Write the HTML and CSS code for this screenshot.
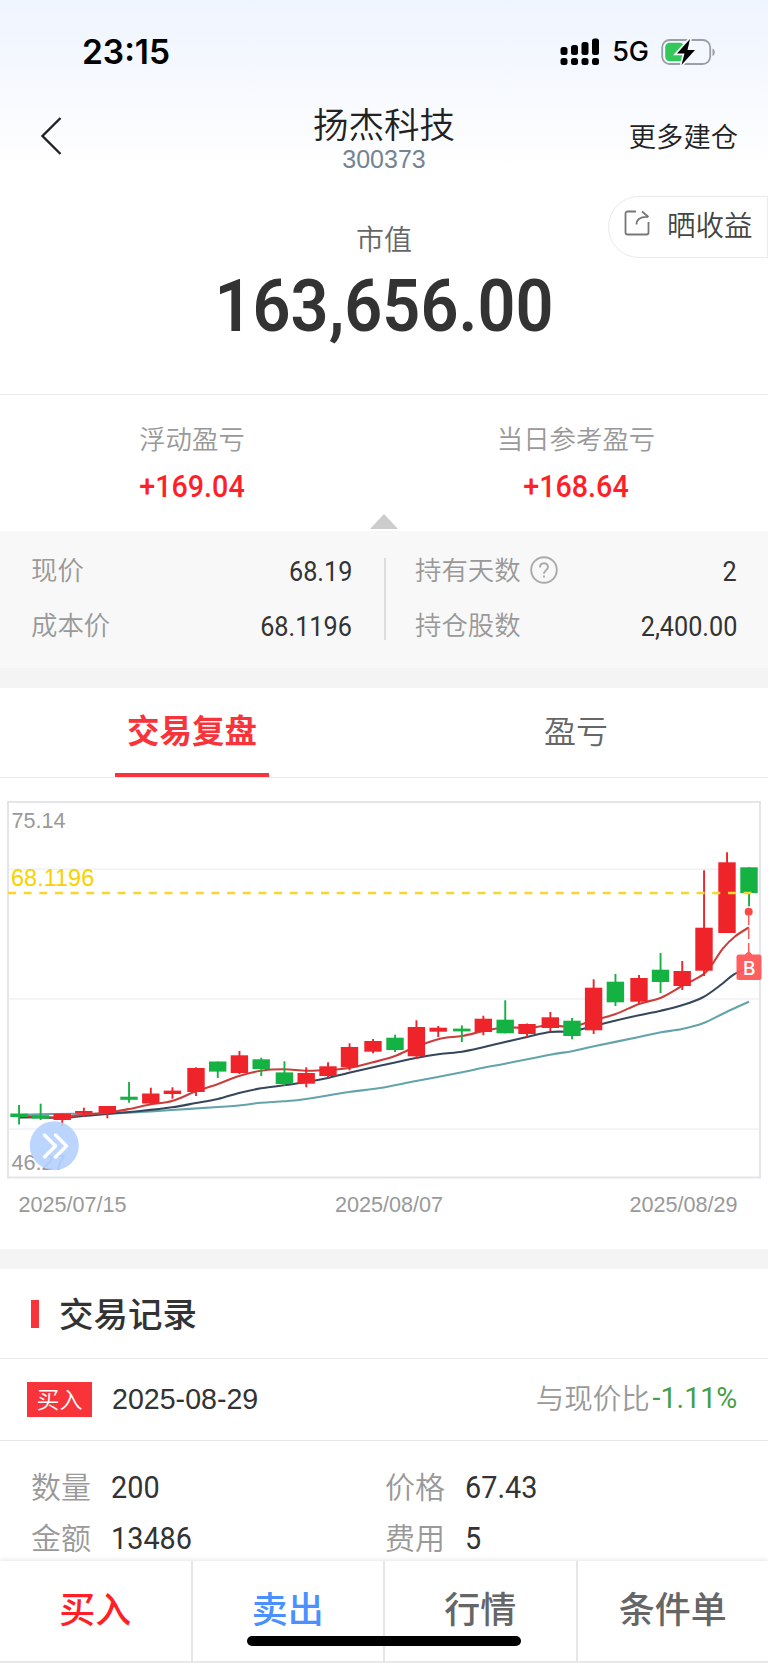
FILE: index.html
```html
<!DOCTYPE html>
<html lang="zh-CN">
<head>
  <meta charset="UTF-8">
  <title>扬杰科技 300373</title>
  <link rel="stylesheet" href="styles.css">
</head>
<body>
  <div class="top">
    <div class="status-bar">
      <span class="time">23:15</span>
      <div class="status-right">
        <svg class="signal" width="40" height="28" viewBox="0 0 40 28">
          <rect x="0.5" y="9" width="7" height="8" rx="2.5"/>
          <rect x="11" y="7" width="7" height="10" rx="2.5"/>
          <rect x="21.5" y="4" width="7" height="13" rx="2.5"/>
          <rect x="32" y="0.5" width="7" height="16.5" rx="2.5"/>
          <rect x="0.5" y="20" width="7" height="7" rx="2.5"/>
          <rect x="11" y="20" width="7" height="7" rx="2.5"/>
          <rect x="21.5" y="20" width="7" height="7" rx="2.5"/>
          <rect x="32" y="20" width="7" height="7" rx="2.5"/>
        </svg>
        <span class="network">5G</span>
        <svg class="battery" width="56" height="28" viewBox="0 0 56 28">
          <rect x="1.2" y="2" width="48" height="24" rx="7.5" fill="none" stroke="#9b9fa5" stroke-width="1.8"/>
          <path d="M51.5 10.5c3 1 3 6.500 0 7.500z" fill="#9b9fa5"/>
          <rect x="4.2" y="4.7" width="19" height="18.6" rx="4.5" fill="#34c759"/>
          <path d="M29 1 16 15.500h7.500L20.500 27 34 12h-7.500z" fill="#000" stroke="#f5f8fe" stroke-width="3.5" paint-order="stroke"/>
        </svg>
      </div>
    </div>

    <div class="nav">
      <svg class="back" width="24" height="40" viewBox="0 0 24 40">
        <path d="M20.5 2 2.5 20l18 18" fill="none" stroke="#222" stroke-width="2.4"/>
      </svg>
      <div class="stock">
        <div class="stock-name">扬杰科技</div>
        <div class="stock-code">300373</div>
      </div>
      <div class="more">更多建仓</div>
    </div>
  </div>

  <div class="market">
    <div class="share">
      <svg width="26" height="26" viewBox="0 0 26 26" fill="none" stroke="#777" stroke-width="1.8">
        <path d="M12 1.5H3.5a2 2 0 0 0-2 2v19a2 2 0 0 0 2 2h19a2 2 0 0 0 2-2V12"/>
        <path d="M12.500 14.500c0-5 3.500-8 11.500-7.500M18 1.500 24.500 7"/>
      </svg>
      <span>晒收益</span>
    </div>
    <div class="market-label">市值</div>
    <div class="market-value">163,656.00</div>
  </div>

  <div class="profit">
    <div class="profit-item">
      <div class="profit-label">浮动盈亏</div>
      <div class="profit-value">+169.04</div>
    </div>
    <div class="profit-item">
      <div class="profit-label">当日参考盈亏</div>
      <div class="profit-value">+168.64</div>
    </div>
    <div class="arrow"></div>
  </div>

  <div class="detail">
    <div class="detail-col">
      <div class="detail-row"><span>现价</span><b>68.19</b></div>
      <div class="detail-row"><span>成本价</span><b>68.1196</b></div>
    </div>
    <div class="detail-col">
      <div class="detail-row">
        <span>持有天数</span>
        <svg class="help" width="28" height="28" viewBox="0 0 28 28" fill="none" stroke="#aaa" stroke-width="1.9">
          <circle cx="14" cy="14" r="12.8"/>
          <path d="M10 11.500c0-5.500 8-5.500 8-.500 0 3-4 3.300-4 6.800M14 19.500v2"/>
        </svg>
        <b>2</b>
      </div>
      <div class="detail-row"><span>持仓股数</span><b>2,400.00</b></div>
    </div>
  </div>

  <div class="gap"></div>

  <div class="tabs">
    <div class="tab active"><span>交易复盘</span></div>
    <div class="tab"><span>盈亏</span></div>
  </div>

  <div class="chart">
    <svg id="chart" width="768" height="471" viewBox="0 -22 768 471">
      <path d="M8 69.3h752M8 199h752M8 329h752" fill="none" stroke="#f0f1f8" stroke-width="1.6"/>
      <rect x="8" y="2" width="752" height="375.5" fill="none" stroke="#e4e4ea" stroke-width="2"/>
      <g id="lines"></g>
      <g id="candles"></g>
      <path d="M8 93h751" stroke="#f8d62b" stroke-width="2.4" stroke-dasharray="8 7.65"/>
      <path d="M748.7 116v36" stroke="#ff5a5a" stroke-width="1.5" stroke-dasharray="9 3 11 4"/>
      <circle cx="748.7" cy="111.7" r="4" fill="#ff4646"/>
      <path d="M739 154.500h6l3.700-3.500 3.700 3.500h6.600a2.500 2.500 0 0 1 2.500 2.500v20.500a2.500 2.500 0 0 1-2.500 2.500h-20a2.500 2.500 0 0 1-2.500-2.500V157a2.500 2.500 0 0 1 2.500-2.500z" fill="#ff5656" fill-opacity=".95"/>
      <text class="mark" x="749.2" y="174.5" text-anchor="middle">B</text>
      <text class="axis" x="11.5" y="27.5">75.14</text>
      <text class="axis cost" x="11" y="86">68.1196</text>
      <text class="axis" x="11.5" y="369.5">46.27</text>
      <text class="axis" x="18.5" y="412">2025/07/15</text>
      <text class="axis" x="335" y="412">2025/08/07</text>
      <text class="axis" x="629.5" y="412">2025/08/29</text>
      <circle cx="54.3" cy="345.7" r="24.5" fill="#b3cfff" fill-opacity=".88"/>
      <path d="M44.5 335 55.5 346 44.5 357M55.5 335l11 11-11 11" fill="none" stroke="#fff" stroke-width="3.4" stroke-linecap="round" stroke-linejoin="round"/>
    </svg>
  </div>

  <div class="gap"></div>

  <div class="record-title"><span>交易记录</span></div>

  <div class="record-head">
    <span class="badge">买入</span>
    <span class="date">2025-08-29</span>
    <span class="compare"><span>与现价比</span><b>-1.11%</b></span>
  </div>

  <div class="record-body">
    <div class="record-item"><span>数量</span><b>200</b></div>
    <div class="record-item"><span>价格</span><b>67.43</b></div>
    <div class="record-item"><span>金额</span><b>13486</b></div>
    <div class="record-item"><span>费用</span><b>5</b></div>
  </div>

  <div class="bottom-bar">
    <div class="buy">买入</div>
    <div class="sell">卖出</div>
    <div>行情</div>
    <div>条件单</div>
    <i class="home-indicator"></i>
  </div>

  <script>
    const RED = '#ef232a';
    const GREEN = '#14b143';

    // x, high, body top, body bottom, low, up (1) / down (0)
    const candles = [
      [19, 305, 313.5, 317, 324.5, 0],
      [40.6, 303.7, 315.2, 318.6, 320, 0],
      [62.2, 313.5, 313.5, 320, 326.3, 1],
      [83.8, 307.7, 311, 313.5, 317, 1],
      [107.3, 306, 306, 313, 318.3, 1],
      [129, 282, 296.7, 299.8, 302.7, 0],
      [150.8, 287.7, 293.5, 303.5, 305, 1],
      [172.4, 287.3, 290.6, 294, 298.7, 1],
      [196, 267.3, 268, 292, 296, 1],
      [217.7, 261.5, 261.5, 271.6, 278, 0],
      [239.4, 251, 255.3, 273, 274, 1],
      [261.2, 257.7, 259.3, 269, 276, 0],
      [284.4, 261.3, 272.4, 284, 286, 0],
      [306.2, 267.3, 273, 283.7, 287.3, 1],
      [328, 262.3, 266.3, 276, 278, 1],
      [349.5, 243.3, 247, 267.3, 270.3, 1],
      [373, 239, 241, 251.7, 253.3, 1],
      [395, 234.7, 237.7, 250, 252, 0],
      [416.4, 220.3, 227, 256.3, 259, 1],
      [438.2, 226, 227.7, 231.7, 237, 1],
      [461.8, 225.3, 228.6, 231.4, 242, 0],
      [483.3, 215.7, 218.7, 232, 235.3, 1],
      [505.2, 200.3, 219.7, 233.3, 233.3, 0],
      [527, 223.5, 224, 234, 237, 1],
      [550.3, 212, 217.3, 228, 231.3, 1],
      [572, 218, 220.7, 236, 239.3, 0],
      [593.6, 179.3, 187.7, 230.3, 234, 1],
      [615.4, 174, 181.7, 202.3, 206, 0],
      [639, 175, 178, 201.7, 203.7, 1],
      [660.5, 153, 169.7, 182, 193, 0],
      [682.2, 161, 171, 186, 190, 1],
      [704, 70.3, 127.7, 170.7, 176, 1],
      [727, 52.3, 62.3, 133, 133, 1],
      [749, 67.3, 67.3, 93, 106.3, 0]
    ];

    const averages = [
      { color: '#63a4ab', points: [[19,315],[50,314],[107,313.5],[140,312],[172,310],[218,307],[239,305.5],[261,302.7],[284,301.3],[306,299],[349,292],[380,288],[416,281],[462,272.3],[483,267.7],[505,263.7],[550,254.7],[572,251.3],[594,246.3],[639,237],[661,232.3],[682,229],[703,223.3],[725,212.7],[749,201.7]] },
      { color: '#36475c', points: [[19,317.5],[40,317.3],[62,318],[84,316],[107,314],[140,311],[172,307.3],[196,303],[218,299],[239,293],[261,288.3],[284,285.3],[306,282],[328,278],[349,272.7],[380,265.7],[416,258],[440,254],[462,251.7],[483,247.3],[505,242],[527,237],[550,232],[572,231.3],[594,226],[615,220.7],[639,215.3],[661,210.7],[682,205.3],[703,197.3],[722,184],[734,174.3],[749,168]] },
      { color: '#c93f3c', points: [[19,315.5],[40,317],[62,317.5],[84,314.5],[107,312.7],[129,309],[151,304.3],[172,301],[196,291.3],[218,284],[239,276],[261,270.7],[284,269.3],[306,270.7],[328,270],[349,268],[373,262.3],[395,256],[416,246.7],[440,238.7],[462,236],[483,231.3],[505,227.3],[527,228],[550,225.3],[572,226.7],[594,220],[615,214.3],[639,204],[661,197.7],[682,186],[703,174.7],[713,163],[723,148.3],[735,136.5],[749,127.3]] }
    ];

    function smooth(p) {
      let d = `M${p[0][0]} ${p[0][1]}`;
      for (let i = 0; i < p.length - 1; i++) {
        const a = p[i - 1] || p[i], b = p[i], c = p[i + 1], e = p[i + 2] || c;
        d += `C${b[0] + (c[0] - a[0]) / 6} ${b[1] + (c[1] - a[1]) / 6} ${c[0] - (e[0] - b[0]) / 6} ${c[1] - (e[1] - b[1]) / 6} ${c[0]} ${c[1]}`;
      }
      return d;
    }

    document.getElementById('lines').innerHTML = averages.map(line =>
      `<path d="${smooth(line.points)}" fill="none" stroke="${line.color}" stroke-width="2.1"/>`
    ).join('');

    document.getElementById('candles').innerHTML = candles.map(([x, high, top, bottom, low, up]) => {
      const color = up ? RED : GREEN;
      return `<rect x="${x - 0.9}" y="${high}" width="1.9" height="${low - high}" fill="${color}"/>
        <rect x="${x - 8.7}" y="${top}" width="17.4" height="${bottom - top}" fill="${color}"/>`;
    }).join('');
  </script>
</body>
</html>
```
FILE: styles.css
```css
* {
  box-sizing: border-box;
}

body {
  margin: 0;
  width: 768px;
  height: 1663px;
  overflow: hidden;
  position: relative;
  background-color: #fff;
  color: #333;
  font-family: "Liberation Sans", "Noto Sans CJK SC", sans-serif;
  font-weight: 350;
}

/* narrow figures */
b {
  display: inline-block;
  font-family: Roboto, sans-serif;
  font-weight: 400;
  transform: scaleX(0.93);
  transform-origin: right center;
}

.top {
  height: 180px;
  background: linear-gradient(#eff5ff, #f5f8fe 40%, #fff 97%);
}

.status-bar {
  display: flex;
  justify-content: space-between;
  align-items: center;
  height: 103px;
  padding: 0 51px 0 82px;
}

.time {
  font-family: Inter, sans-serif;
  font-weight: 600;
  font-size: 33.5px;
  color: #000;
}

.status-right {
  display: flex;
  align-items: center;
}

.network {
  font-family: Inter, sans-serif;
  font-size: 27px;
  font-weight: 500;
  color: #000;
  margin: 0 12px 0 12px;
}

.nav {
  display: grid;
  grid-template-columns: 1fr auto 1fr;
  height: 77px;
  padding: 0 30px 0 40px;
}

.back {
  margin-top: 13px;
}

.stock {
  text-align: center;
  margin-right: 10px;
  color: #222;
}

.stock-name {
  font-size: 35.5px;
  line-height: 46px;
}

.stock-code {
  font-size: 25px;
  line-height: 20px;
  color: #748494;
}

.more {
  justify-self: end;
  font-size: 27.3px;
  line-height: 70px;
  color: #222;
}

.market {
  position: relative;
  height: 215px;
  padding-top: 40px;
  text-align: center;
  border-bottom: 1px solid #eaeaea;
}

.share {
  position: absolute;
  top: 16px;
  right: 0;
  display: flex;
  align-items: center;
  gap: 17px;
  width: 160px;
  height: 62px;
  padding-left: 15px;
  border: 1px solid #eaeaea;
  border-radius: 31px 0 0 31px;
  font-size: 28.5px;
  color: #444;
}

.share svg {
  flex: none;
  margin-top: -8px;
}

.share span {
  margin-top: -7px;
}

.market-label {
  font-size: 28px;
  line-height: 42px;
  color: #666;
}

.market-value {
  font-family: Roboto, sans-serif;
  font-size: 72px;
  font-weight: 600;
  line-height: 90px;
  transform: scaleX(0.925);
}

.profit {
  position: relative;
  display: flex;
  height: 136px;
  padding-top: 25px;
}

.profit-item {
  flex: 1;
  text-align: center;
}

.profit-label {
  font-size: 26.4px;
  line-height: 40px;
  color: #999;
}

.profit-value {
  margin-top: 7px;
  font-family: Roboto, sans-serif;
  font-size: 31px;
  font-weight: 500;
  line-height: 40px;
  color: #ff1f28;
  transform: scaleX(0.925);
}

.arrow {
  position: absolute;
  left: 370px;
  bottom: 2px;
  border: 14px solid transparent;
  border-top: 0;
  border-bottom: 15px solid #ccc;
}

.detail {
  display: grid;
  grid-template-columns: 1fr 1fr;
  height: 137px;
  padding: 27px 31px 0 31px;
  background-color: #f8f8f8;
}

.detail-col {
  height: 82px;
  padding-right: 32px;
}

.detail-col + .detail-col {
  border-left: 2px solid #ddd;
  padding: 0 0 0 29px;
}

.detail-row {
  display: flex;
  align-items: center;
  height: 26px;
  margin-bottom: 29px;
  font-size: 26.4px;
  color: #999;
}

.detail-row span {
  margin-top: -5px;
}

.detail-row b {
  margin-left: auto;
  font-size: 28px;
  color: #333;
  transform: scaleX(0.9);
}

.help {
  margin: -2px 0 0 9px;
}

.gap {
  height: 20px;
  background-color: #f4f4f4;
}

.tabs {
  display: flex;
  height: 90px;
  border-bottom: 1px solid #ebebeb;
}

.tab {
  flex: 1;
  text-align: center;
  font-size: 32px;
  line-height: 89px;
  color: #666;
}

.tab span {
  display: inline-block;
  height: 89px;
}

.tab.active span {
  padding: 0 12px;
  font-size: 32.5px;
  font-weight: 600;
  color: #f8333a;
  border-bottom: 4px solid #f8333a;
}

.chart svg {
  display: block;
}

.axis {
  font-size: 21.6px;
  fill: #999;
}

.axis.cost {
  font-size: 23.5px;
  fill: #f9d100;
}

.mark {
  font-family: Inter, sans-serif;
  font-size: 19px;
  font-weight: 500;
  fill: #fff;
}

.record-title {
  display: flex;
  align-items: center;
  gap: 20px;
  height: 90px;
  padding-left: 31px;
  border-bottom: 1px solid #e8e8e8;
  font-size: 34.5px;
  font-weight: 500;
}

.record-title::before {
  content: "";
  width: 8px;
  height: 28px;
  background-color: #f8333a;
}

.record-title span {
  margin-top: -3px;
}

.record-head {
  display: flex;
  align-items: center;
  height: 82px;
  padding: 0 31px 0 27px;
  border-bottom: 1px solid #e8e8e8;
}

.badge {
  width: 65px;
  height: 35px;
  line-height: 36px;
  text-align: center;
  font-size: 23px;
  color: #fff;
  background-color: #f8333a;
}

.date {
  margin-left: 20px;
  font-size: 28.6px;
}

.compare {
  display: flex;
  align-items: center;
  margin-left: auto;
  margin-top: -3px;
  font-size: 28.5px;
  color: #999;
}

.compare span {
  margin-top: -3px;
}

.compare b {
  font-size: 29.5px;
  color: #43a047;
  transform: scaleX(0.97);
}

.record-body {
  display: grid;
  grid-template-columns: 354px 1fr;
  padding: 21px 0 0 31px;
}

.record-item {
  display: flex;
  align-items: center;
  height: 51px;
  font-size: 30px;
  color: #999;
}

.record-item span {
  margin-top: -5px;
}

.record-item b {
  margin-left: 20px;
  font-size: 31px;
  color: #333;
  transform-origin: left center;
}

.bottom-bar {
  position: absolute;
  left: 0;
  right: 0;
  bottom: 0;
  display: flex;
  height: 102px;
  background-color: #fff;
  border-bottom: 2px solid #e8e8e8;
  box-shadow: 0 -1px 5px rgba(0, 0, 0, 0.1);
}

.bottom-bar div {
  flex: 1;
  text-align: center;
  font-size: 36px;
  font-weight: 500;
  line-height: 100px;
  color: #666;
  border-left: 2px solid #e6e6e6;
}

.bottom-bar .buy {
  color: #ff1f28;
  border-left: none;
}

.bottom-bar .sell {
  color: #4a90ff;
}

.home-indicator {
  position: absolute;
  left: 247px;
  bottom: 15px;
  width: 274px;
  height: 10px;
  border-radius: 5px;
  background-color: #000;
}
```
